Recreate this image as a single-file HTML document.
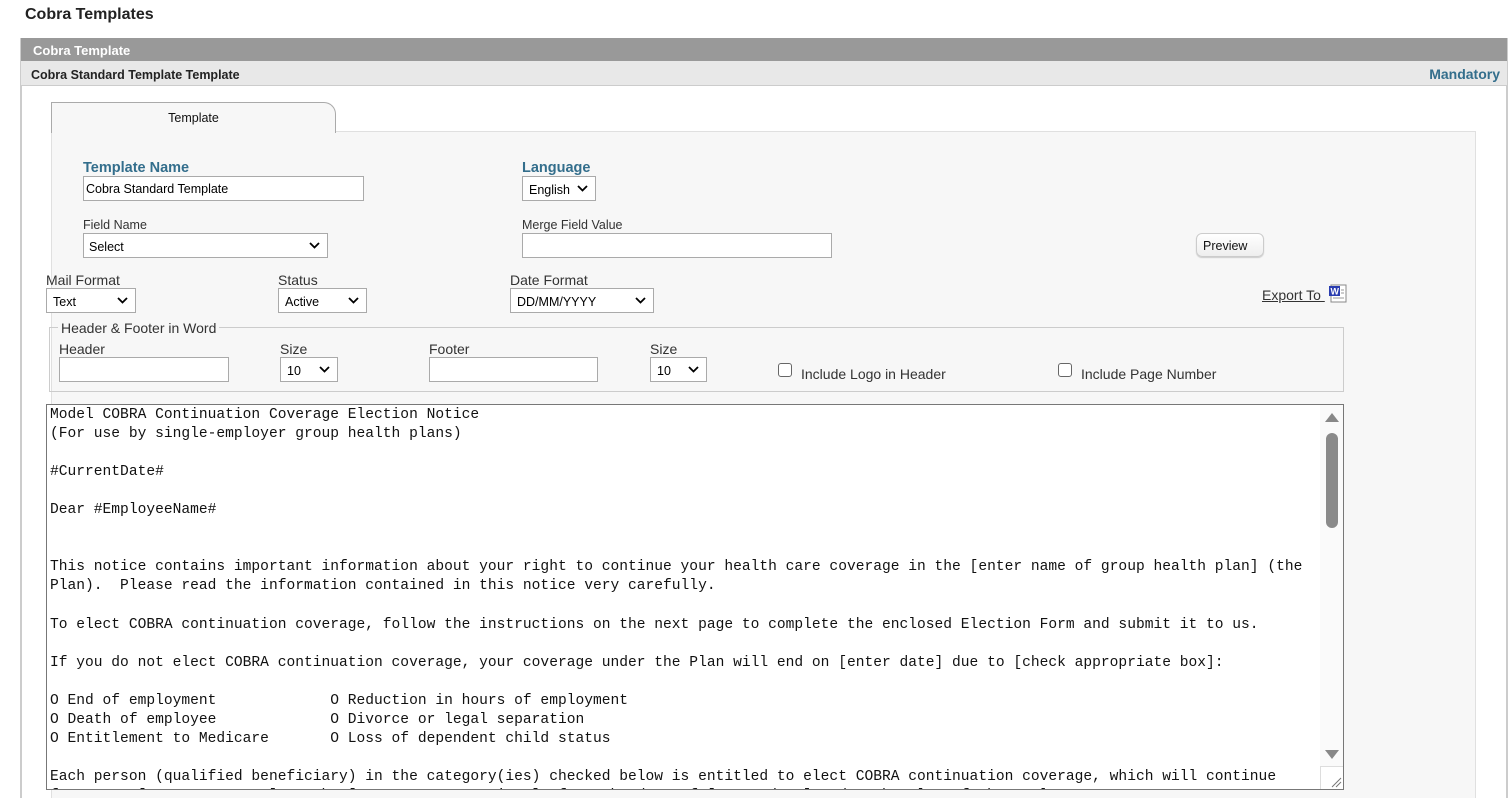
<!DOCTYPE html>
<html><head><meta charset="utf-8">
<style>
*{box-sizing:border-box;margin:0;padding:0}
body{width:1512px;height:798px;overflow:hidden;background:#fff;font-family:"Liberation Sans",sans-serif;color:#222;position:relative}
.a{position:absolute}
.lbl{position:absolute;font-size:14px;color:#333;white-space:nowrap}
.sm{font-size:12.5px}
.blue{color:#336e8c;font-weight:bold;font-size:14.5px}
.inp{position:absolute;background:#fff;border:1px solid #aaa;height:25px}
.sel{position:absolute;background:#fff;border:1px solid #aaa;height:25px;font-size:12.5px;color:#000;padding:6px 0 0 6px;white-space:nowrap}
.sel svg{position:absolute;right:7px;top:8px}
pre{font-family:"Liberation Mono",monospace;font-size:14.6px;line-height:19.05px;color:#111}
.cb{position:absolute;width:14px;height:14px;border:1px solid #666;border-radius:3px;background:#fff}
</style></head><body>
<div class="a" style="left:25px;top:6px;font-size:16px;font-weight:bold;color:#222">Cobra Templates</div>
<div class="a" style="left:20px;top:38px;width:1488px;height:760px;border-left:2px solid #ccc;border-right:2px solid #ccc"></div>
<div class="a" style="left:21px;top:38px;width:1486px;height:23px;background:#999;color:#fff;font-weight:bold;font-size:13px;padding:5px 0 0 12px">Cobra Template</div>
<div class="a" style="left:21px;top:61px;width:1486px;height:25px;background:#e8e8e8;border-bottom:1px solid #ccc;font-weight:bold;font-size:12.5px;padding:7px 0 0 10px;color:#222">Cobra Standard Template Template<span style="position:absolute;right:7px;top:5px;color:#336e8c;font-size:14px">Mandatory</span></div>
<div class="a" style="left:51px;top:131px;width:1425px;height:667px;background:#f7f7f7;border:1px solid #e0e0e0;border-bottom:none"></div>
<div class="a" style="left:51px;top:102px;width:285px;height:31px;background:#f7f7f7;border:1px solid #aaa;border-bottom:none;border-top-right-radius:12px;font-size:12.5px;text-align:center;padding-top:8px;color:#111">Template</div>

<div class="lbl blue" style="left:83px;top:160px">Template Name</div>
<div class="inp" style="left:83px;top:176px;width:281px;font-size:12.5px;color:#000;padding:5px 0 0 2px">Cobra Standard Template</div>
<div class="lbl blue" style="left:522px;top:160px">Language</div>
<div class="sel" style="left:522px;top:176px;width:74px">English<svg width="11" height="7"><path d="M1 1l4.5 4.5L10 1" stroke="#000" stroke-width="1.8" fill="none"/></svg></div>

<div class="lbl sm" style="left:83px;top:218px">Field Name</div>
<div class="sel" style="left:83px;top:233px;width:245px;padding-left:5px">Select<svg width="11" height="7"><path d="M1 1l4.5 4.5L10 1" stroke="#000" stroke-width="1.8" fill="none"/></svg></div>
<div class="lbl sm" style="left:522px;top:218px">Merge Field Value</div>
<div class="inp" style="left:522px;top:233px;width:310px"></div>
<div class="a" style="left:1196px;top:233px;width:68px;height:24px;border:1px solid #ccc;border-radius:6px;background:linear-gradient(#fff,#eee);font-size:12.5px;padding:5px 0 0 6px;color:#111;box-shadow:0 1px 1px #ccc">Preview</div>

<div class="lbl" style="left:46px;top:272px">Mail Format</div>
<div class="sel" style="left:46px;top:288px;width:90px">Text<svg width="11" height="7"><path d="M1 1l4.5 4.5L10 1" stroke="#000" stroke-width="1.8" fill="none"/></svg></div>
<div class="lbl" style="left:278px;top:272px">Status</div>
<div class="sel" style="left:278px;top:288px;width:89px">Active<svg width="11" height="7"><path d="M1 1l4.5 4.5L10 1" stroke="#000" stroke-width="1.8" fill="none"/></svg></div>
<div class="lbl" style="left:510px;top:272px">Date Format</div>
<div class="sel" style="left:510px;top:288px;width:144px">DD/MM/YYYY<svg width="11" height="7"><path d="M1 1l4.5 4.5L10 1" stroke="#000" stroke-width="1.8" fill="none"/></svg></div>
<div class="lbl" style="left:1262px;top:287px;text-decoration:underline;color:#333">Export To&nbsp;</div>
<svg class="a" style="left:1328px;top:284px" width="20" height="19"><rect x="3" y="1" width="15" height="17" fill="#fff" stroke="#888"/><rect x="1" y="2" width="11" height="10" fill="#2a3db0"/><text x="2.5" y="10.5" font-size="9" font-weight="bold" fill="#fff" font-family="Liberation Sans">W</text><path d="M13 6h3M13 9h3M5 14h11" stroke="#999"/></svg>

<div class="a" style="left:49px;top:327px;width:1295px;height:65px;border:1px solid #ccc"></div>
<div class="lbl" style="left:58px;top:320px;background:#f7f7f7;padding:0 3px">Header &amp; Footer in Word</div>
<div class="lbl" style="left:59px;top:341px">Header</div>
<div class="inp" style="left:59px;top:357px;width:170px"></div>
<div class="lbl" style="left:280px;top:341px">Size</div>
<div class="sel" style="left:280px;top:357px;width:58px">10<svg width="11" height="7"><path d="M1 1l4.5 4.5L10 1" stroke="#000" stroke-width="1.8" fill="none"/></svg></div>
<div class="lbl" style="left:429px;top:341px">Footer</div>
<div class="inp" style="left:429px;top:357px;width:169px"></div>
<div class="lbl" style="left:650px;top:341px">Size</div>
<div class="sel" style="left:650px;top:357px;width:57px">10<svg width="11" height="7"><path d="M1 1l4.5 4.5L10 1" stroke="#000" stroke-width="1.8" fill="none"/></svg></div>
<div class="cb" style="left:778px;top:363px"></div>
<div class="lbl" style="left:801px;top:366px">Include Logo in Header</div>
<div class="cb" style="left:1058px;top:363px"></div>
<div class="lbl" style="left:1081px;top:366px">Include Page Number</div>

<div class="a" style="left:46px;top:404px;width:1298px;height:386px;background:#fff;border:1px solid #777;overflow:hidden">
<pre style="position:absolute;left:3px;top:1px">Model COBRA Continuation Coverage Election Notice
(For use by single-employer group health plans)

#CurrentDate#

Dear #EmployeeName#


This notice contains important information about your right to continue your health care coverage in the [enter name of group health plan] (the
Plan).  Please read the information contained in this notice very carefully.

To elect COBRA continuation coverage, follow the instructions on the next page to complete the enclosed Election Form and submit it to us.

If you do not elect COBRA continuation coverage, your coverage under the Plan will end on [enter date] due to [check appropriate box]:

O End of employment             O Reduction in hours of employment
O Death of employee             O Divorce or legal separation
O Entitlement to Medicare       O Loss of dependent child status

Each person (qualified beneficiary) in the category(ies) checked below is entitled to elect COBRA continuation coverage, which will continue
for up to [enter 18 or 36] months [enter as appropriate] after the date of [enter date] under the Plan of the Employee</pre>
<div class="a" style="left:1273px;top:0;width:23px;height:361px;background:#fafafa"></div>
<svg class="a" style="left:1278px;top:7px" width="14" height="10"><path d="M0 10L7 1L14 10Z" fill="#888"/></svg>
<div class="a" style="left:1279px;top:28px;width:12px;height:95px;background:#8a8a8a;border-radius:6px"></div>
<svg class="a" style="left:1278px;top:345px" width="14" height="10"><path d="M0 0L7 9L14 0Z" fill="#888"/></svg>
<div class="a" style="left:1273px;top:361px;width:23px;height:24px;background:#fff;border-left:1px solid #ddd;border-top:1px solid #ddd"></div>
<svg class="a" style="left:1284px;top:372px" width="11" height="11"><path d="M1 10L10 1M5 10L10 5" stroke="#777"/></svg>
</div>
</body></html>
